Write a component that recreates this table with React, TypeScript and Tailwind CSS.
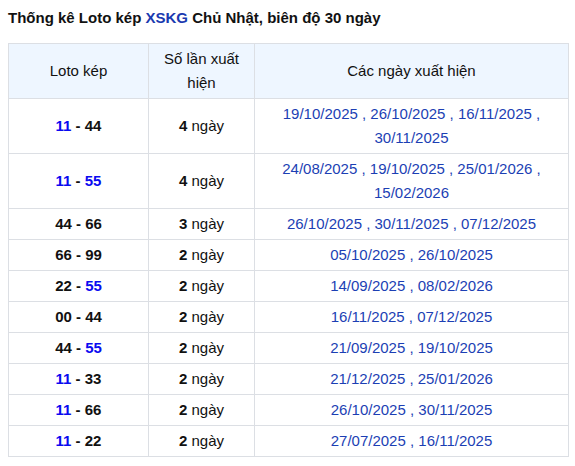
const rows: { a: string; b: string; n: number; dates: string[] }[] = [
  { a: "11", b: "44", n: 4, dates: ["19/10/2025", "26/10/2025", "16/11/2025", "30/11/2025"] },
  { a: "11", b: "55", n: 4, dates: ["24/08/2025", "19/10/2025", "25/01/2026", "15/02/2026"] },
  { a: "44", b: "66", n: 3, dates: ["26/10/2025", "30/11/2025", "07/12/2025"] },
  { a: "66", b: "99", n: 2, dates: ["05/10/2025", "26/10/2025"] },
  { a: "22", b: "55", n: 2, dates: ["14/09/2025", "08/02/2026"] },
  { a: "00", b: "44", n: 2, dates: ["16/11/2025", "07/12/2025"] },
  { a: "44", b: "55", n: 2, dates: ["21/09/2025", "19/10/2025"] },
  { a: "11", b: "33", n: 2, dates: ["21/12/2025", "25/01/2026"] },
  { a: "11", b: "66", n: 2, dates: ["26/10/2025", "30/11/2025"] },
  { a: "11", b: "22", n: 2, dates: ["27/07/2025", "16/11/2025"] },
]

function Num({ v }: { v: string }) {
  const blue = v === "11" || v === "55"
  return <span className={blue ? "text-[#0a0af0]" : "text-[#111]"}>{v}</span>
}

export default function App() {
  return (
    <div className="bg-white px-2 pt-[7px] text-[#111]" style={{ fontFamily: '"Liberation Sans", Arial, sans-serif' }}>
      <h2 className="text-[15px] font-bold leading-[22px]">
        Thống kê Loto kép <span className="text-[#1a3ab0]">XSKG</span> Chủ Nhật, biên độ 30 ngày
      </h2>
      <table className="mt-[14px] w-[561px] border-collapse text-center text-[15px] leading-6">
        <thead>
          <tr className="bg-[#eef6ff]">
            <th className="w-[140px] border border-[#dcdfe4] px-2 py-[3px] font-normal">Loto kép</th>
            <th className="w-[106px] border border-[#dcdfe4] px-3 py-[3px] font-normal">Số lần xuất hiện</th>
            <th className="border border-[#dcdfe4] px-2 py-[3px] font-normal">Các ngày xuất hiện</th>
          </tr>
        </thead>
        <tbody>
          {rows.map((r, i) => (
            <tr key={i}>
              <td className="border border-[#dcdfe4] px-2 py-[3px] font-bold">
                <Num v={r.a} /> - <Num v={r.b} />
              </td>
              <td className="border border-[#dcdfe4] px-2 py-[3px]">
                <b>{r.n}</b> ngày
              </td>
              <td className="border border-[#dcdfe4] px-[14px] py-[3px] text-[#1c3fb4]">
                {r.dates.join(" , ")}
              </td>
            </tr>
          ))}
        </tbody>
      </table>
      <p className="mt-[4px] text-[15px]">&nbsp;</p>
    </div>
  )
}
